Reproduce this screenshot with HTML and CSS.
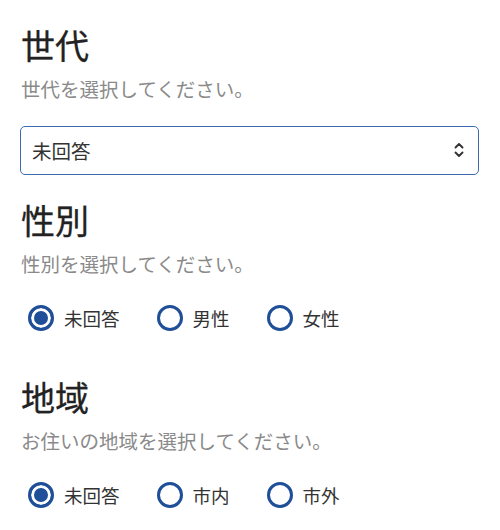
FILE: index.html
```html
<!DOCTYPE html>
<html lang="ja">
<head>
<meta charset="utf-8">
<title>アンケート</title>
<link rel="stylesheet" href="styles.css">
</head>
<body>
<main class="form">
  <section class="field">
    <h2 class="field-title">世代</h2>
    <p class="field-help">世代を選択してください。</p>
    <div class="select-wrap">
      <select class="select">
        <option>未回答</option>
      </select>
      <svg class="select-icon" width="10" height="16" viewBox="0 0 10 16" aria-hidden="true">
        <path d="M1.5 5.5 L5 2 L8.5 5.5 M1.5 10.5 L5 14 L8.5 10.5" fill="none" stroke="#333" stroke-width="1.9" stroke-linecap="round" stroke-linejoin="round"/>
      </svg>
    </div>
  </section>

  <section class="field">
    <h2 class="field-title">性別</h2>
    <p class="field-help">性別を選択してください。</p>
    <div class="radio-group">
      <label class="radio"><input type="radio" name="gender" checked><span>未回答</span></label>
      <label class="radio"><input type="radio" name="gender"><span>男性</span></label>
      <label class="radio"><input type="radio" name="gender"><span>女性</span></label>
    </div>
  </section>

  <section class="field">
    <h2 class="field-title">地域</h2>
    <p class="field-help">お住いの地域を選択してください。</p>
    <div class="radio-group">
      <label class="radio"><input type="radio" name="area" checked><span>未回答</span></label>
      <label class="radio"><input type="radio" name="area"><span>市内</span></label>
      <label class="radio"><input type="radio" name="area"><span>市外</span></label>
    </div>
  </section>
</main>
</body>
</html>
```

FILE: styles.css
```css
html, body {
  margin: 0;
  padding: 0;
  background: #fff;
}

body {
  font-family: "Noto Sans CJK JP", "Noto Sans", sans-serif;
  color: #222;
}

.form {
  padding: 25px 21px 0 21px;
  display: flex;
  flex-direction: column;
}

.field + .field {
  margin-top: 25px;
}

.field-title {
  margin: 0;
  font-size: 34px;
  line-height: 40px;
  font-weight: 400;
  color: #222;
  -webkit-text-stroke: 0.3px #222;
}

.field-help {
  margin: 10px 0 0 0;
  font-size: 19.5px;
  line-height: 28px;
  color: #8a8a8a;
}

.select-wrap {
  position: relative;
  margin: 23px 0 0 -1px;
}

.select {
  appearance: none;
  -webkit-appearance: none;
  display: block;
  width: 100%;
  height: 49px;
  box-sizing: border-box;
  border: 1.5px solid #3d6aae;
  border-radius: 5px;
  background: #fff;
  padding: 0 40px 0 11px;
  font-family: inherit;
  font-size: 19.5px;
  color: #333;
}

.select-icon {
  position: absolute;
  right: 15px;
  top: 16px;
}

.radio-group {
  display: flex;
  align-items: center;
  margin-top: 25px;
  margin-bottom: 19px;
  padding-left: 7px;
}

.radio {
  display: flex;
  align-items: center;
  gap: 10px;
  margin-right: 37px;
  font-size: 18.5px;
  line-height: 30px;
  color: #333;
}

.radio input {
  appearance: none;
  -webkit-appearance: none;
  margin: 0;
  width: 26px;
  height: 26px;
  box-sizing: border-box;
  border: 3px solid #1f4f98;
  border-radius: 50%;
  background: #fff;
}

.radio input:checked {
  background: #1f4f98;
  box-shadow: inset 0 0 0 3px #fff;
}
```
